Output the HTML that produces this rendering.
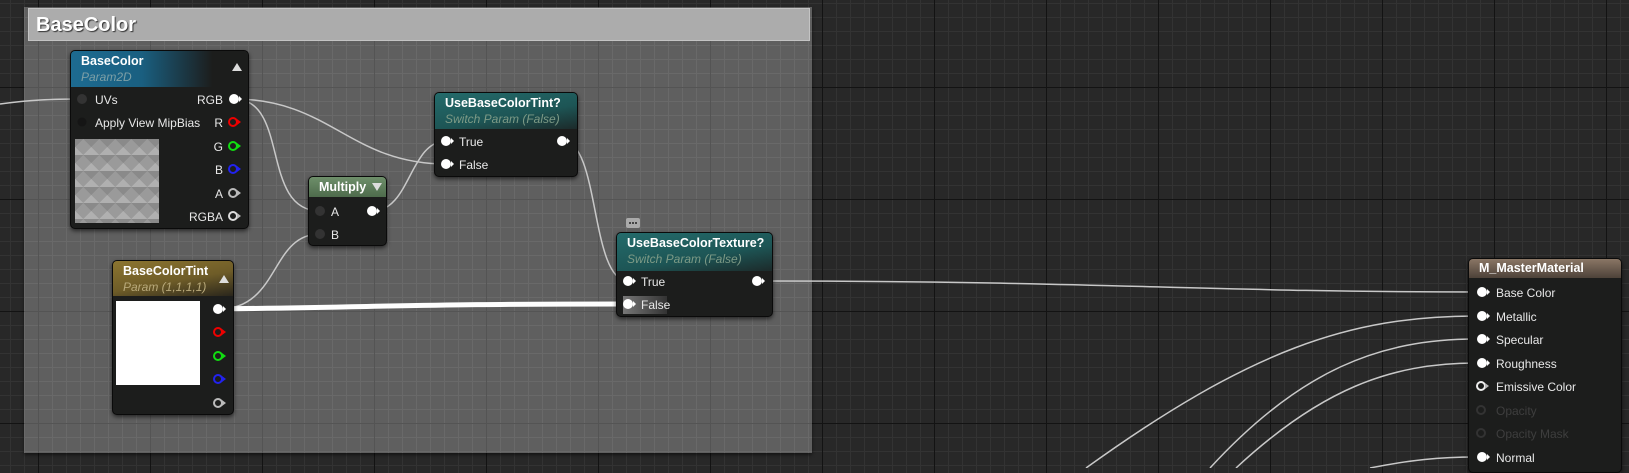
<!DOCTYPE html>
<html><head><meta charset="utf-8"><style>
*{margin:0;padding:0;box-sizing:border-box}
body{width:1629px;height:468px;overflow:hidden;position:relative;font-family:"Liberation Sans",sans-serif;
background-color:#282828;
background-image:
linear-gradient(90deg,#131313 1px,transparent 1px),
linear-gradient(0deg,#131313 1px,transparent 1px),
linear-gradient(90deg,#333 1px,transparent 1px),
linear-gradient(0deg,#333 1px,transparent 1px);
background-size:112px 112px,112px 112px,14px 14px,14px 14px;
background-position:38px 0,0 88px,10px 0,0 4px;}
.grp{position:absolute;left:24px;top:7px;width:788px;height:446px;background-color:#5f5f5f;
background-image:linear-gradient(90deg,#545454 1px,transparent 1px),linear-gradient(0deg,#545454 1px,transparent 1px),
linear-gradient(90deg,#696969 1px,transparent 1px),linear-gradient(0deg,#696969 1px,transparent 1px);
background-size:112px 112px,112px 112px,14px 14px,14px 14px;background-position:14px 0,0 81px,0 0,0 11px;
box-shadow:0 2px 3px rgba(0,0,0,.5)}
.gt{position:absolute;left:28px;top:8px;width:782px;height:33px;background:#acacac;border:1px solid #c4c4c4;
color:#fff;font-weight:bold;font-size:20px;padding:5px 0 0 7px;text-shadow:1px 1px 1px #333}
.n{position:absolute;background:#1c1d1c;border:1px solid #0a0a0a;border-radius:5px;box-shadow:0 2px 4px rgba(0,0,0,.6);color:#e6e6e6;font-size:12px;overflow:hidden}
.h{position:absolute;left:0;top:0;right:0}
.t{position:absolute;font-weight:bold;font-size:12.5px;color:#fff;white-space:nowrap}
.s{position:absolute;font-style:italic;font-size:12px;white-space:nowrap}
.l{position:absolute;font-size:12px;color:#e8e8e8;white-space:nowrap;line-height:14px}
.r{text-align:right}
.tri{position:absolute;width:0;height:0;border-left:5px solid transparent;border-right:5px solid transparent;border-bottom:8px solid #ddd}
.trid{position:absolute;width:0;height:0;border-left:5px solid transparent;border-right:5px solid transparent;border-top:8px solid #ddd}
svg{position:absolute;left:0;top:0}
.tex{position:absolute;left:4px;top:88px;width:84px;height:84px;background-color:#9a9a9a;
background-image:linear-gradient(135deg,#8a8a8a 25%,transparent 25%),linear-gradient(225deg,#8a8a8a 25%,transparent 25%),linear-gradient(315deg,#b0b0b0 25%,transparent 25%),linear-gradient(45deg,#b0b0b0 25%,transparent 25%);
background-size:16px 16px}
</style></head><body>
<div class="grp"></div>
<div class="gt">BaseColor</div>
<svg width="1629" height="468" fill="none" stroke="#c8c8c8" stroke-width="1.5">
<path d="M0 104 C30 100 50 99 82 99"/>
<path d="M234 99 C330 99 350 164 446 164"/>
<path d="M234 99 C290 99 260 211 320 211"/>
<path d="M373 211 C410 211 410 141 446 141"/>
<path d="M219 309 C280 309 270 234 320 234"/>
<path d="M563 141 C600 141 590 281 628 281"/>
<path d="M758 281 C1100 281 1200 292 1482 292"/>
<path d="M1086 468 C1250 350 1350 316 1476 316"/>
<path d="M1210 468 C1300 370 1380 339 1476 339"/>
<path d="M1236 468 C1320 390 1390 363 1476 363"/>
<path d="M1370 468 C1410 460 1440 457 1476 457"/>
<path d="M219 309 C420 306 430 304 628 304" stroke="#fff" stroke-width="5"/>
</svg>

<div class="n" style="left:70px;top:50px;width:179px;height:179px">
<div class="h" style="height:36px;background:linear-gradient(90deg,#1d6b91 0%,#1a5f80 40%,#1c1d1c 80%)"></div>
<div class="t" style="left:10px;top:3px">BaseColor</div>
<div class="s" style="left:10px;top:19px;color:#7d9fa6">Param2D</div>
<div class="tri" style="left:161px;top:12px"></div>
<div class="l" style="left:24px;top:42px">UVs</div>
<div class="l" style="left:24px;top:65px">Apply View MipBias</div>
<div class="tex"></div>
<div class="l r" style="right:25px;top:42px">RGB</div>
<div class="l r" style="right:25px;top:65px">R</div>
<div class="l r" style="right:25px;top:89px">G</div>
<div class="l r" style="right:25px;top:112px">B</div>
<div class="l r" style="right:25px;top:136px">A</div>
<div class="l r" style="right:25px;top:159px">RGBA</div>
</div>

<div class="n" style="left:308px;top:176px;width:79px;height:70px">
<div class="h" style="height:20px;background:linear-gradient(180deg,#6e8f6a,#4e6b4c)"></div>
<div class="t" style="left:10px;top:3px">Multiply</div>
<div class="trid" style="left:63px;top:6px"></div>
<div class="l" style="left:22px;top:28px">A</div>
<div class="l" style="left:22px;top:51px">B</div>
</div>

<div class="n" style="left:434px;top:92px;width:144px;height:85px">
<div class="h" style="height:36px;background:linear-gradient(170deg,#246b6b 0%,#1d5555 60%,#1c2a2a 100%)"></div>
<div class="t" style="left:10px;top:3px">UseBaseColorTint?</div>
<div class="s" style="left:10px;top:19px;color:#7d9a86">Switch Param (False)</div>
<div class="l" style="left:24px;top:42px">True</div>
<div class="l" style="left:24px;top:65px">False</div>
</div>

<div style="position:absolute;left:626px;top:218px;width:14px;height:10px;background:#aaa;border-radius:2px"></div>
<div style="position:absolute;left:629px;top:222px;width:8px;height:2px;border-top:2px dotted #444"></div>

<div class="n" style="left:616px;top:232px;width:157px;height:85px">
<div class="h" style="height:38px;background:linear-gradient(170deg,#246b6b 0%,#1d5555 60%,#1c2a2a 100%)"></div>
<div class="t" style="left:10px;top:3px">UseBaseColorTexture?</div>
<div class="s" style="left:10px;top:19px;color:#7d9a86">Switch Param (False)</div>
<div class="l" style="left:24px;top:42px">True</div>
<div style="position:absolute;left:6px;top:63px;width:44px;height:18px;background:linear-gradient(90deg,#777,#333)"></div>
<div class="l" style="left:24px;top:65px">False</div>
</div>

<div class="n" style="left:112px;top:260px;width:122px;height:155px">
<div class="h" style="height:35px;background:linear-gradient(170deg,#8c7530 0%,#6e5c28 55%,#2a261c 100%)"></div>
<div class="t" style="left:10px;top:3px">BaseColorTint</div>
<div class="s" style="left:10px;top:19px;color:#b8a97a">Param (1,1,1,1)</div>
<div class="tri" style="left:106px;top:14px"></div>
<div style="position:absolute;left:3px;top:40px;width:84px;height:84px;background:#fff"></div>
</div>

<div class="n" style="left:1468px;top:258px;width:154px;height:215px">
<div class="h" style="height:19px;background:linear-gradient(180deg,#8a7665,#4d4239)"></div>
<div class="t" style="left:10px;top:2px">M_MasterMaterial</div>
<div class="l" style="left:27px;top:27px">Base Color</div>
<div class="l" style="left:27px;top:51px">Metallic</div>
<div class="l" style="left:27px;top:74px">Specular</div>
<div class="l" style="left:27px;top:98px">Roughness</div>
<div class="l" style="left:27px;top:121px">Emissive Color</div>
<div class="l" style="left:27px;top:145px;color:#3e3e3e">Opacity</div>
<div class="l" style="left:27px;top:168px;color:#3e3e3e">Opacity Mask</div>
<div class="l" style="left:27px;top:192px">Normal</div>
</div>

<svg width="1629" height="468">
<defs>
<g id="pf"><circle cx="0" cy="0" r="5" fill="#fff"/><path d="M5 -3 L8 0 L5 3Z" fill="#fff"/></g>
</defs>
<g fill="#333"><circle cx="82" cy="99" r="5"/><circle cx="82" cy="122" r="4.5" fill="#151515"/></g>
<use href="#pf" x="234" y="99"/>
<g fill="none" stroke-width="2">
<circle cx="233" cy="122" r="4" stroke="#e00"/><circle cx="233" cy="146" r="4" stroke="#1d1"/><circle cx="233" cy="169" r="4" stroke="#22e"/><circle cx="233" cy="193" r="4" stroke="#bbb"/><circle cx="233" cy="216" r="4" stroke="#ddd"/>
<circle cx="218" cy="332" r="4" stroke="#e00"/><circle cx="218" cy="356" r="4" stroke="#1d1"/><circle cx="218" cy="379" r="4" stroke="#22e"/><circle cx="218" cy="403" r="4" stroke="#bbb"/>
<circle cx="1481" cy="386" r="4" stroke="#eee"/><circle cx="1481" cy="410" r="4" stroke="#333"/><circle cx="1481" cy="433" r="4" stroke="#333"/>
</g>
<g fill="#e00"><path d="M237 119 L241 122 L237 125Z"/></g>
<g fill="#1d1"><path d="M237 143 L241 146 L237 149Z"/></g>
<g fill="#22e"><path d="M237 166 L241 169 L237 172Z"/></g>
<g fill="#bbb"><path d="M237 190 L241 193 L237 196Z M237 213 L241 216 L237 219Z"/></g>
<g fill="#e00"><path d="M222 329 L226 332 L222 335Z"/></g>
<g fill="#1d1"><path d="M222 353 L226 356 L222 359Z"/></g>
<g fill="#22e"><path d="M222 376 L226 379 L222 382Z"/></g>
<g fill="#bbb"><path d="M222 400 L226 403 L222 406Z M1485 383 L1489 386 L1485 389Z"/></g>
<g fill="#333"><circle cx="320" cy="211" r="5"/><circle cx="320" cy="234" r="5"/></g>
<use href="#pf" x="372" y="211"/>
<use href="#pf" x="446" y="141"/><use href="#pf" x="446" y="164"/><use href="#pf" x="562" y="141"/>
<use href="#pf" x="628" y="281"/><use href="#pf" x="628" y="304"/><use href="#pf" x="757" y="281"/>
<use href="#pf" x="218" y="309"/>
<use href="#pf" x="1482" y="292"/><use href="#pf" x="1482" y="316"/><use href="#pf" x="1482" y="339"/><use href="#pf" x="1482" y="363"/><use href="#pf" x="1482" y="457"/>
</svg>
</body></html>
